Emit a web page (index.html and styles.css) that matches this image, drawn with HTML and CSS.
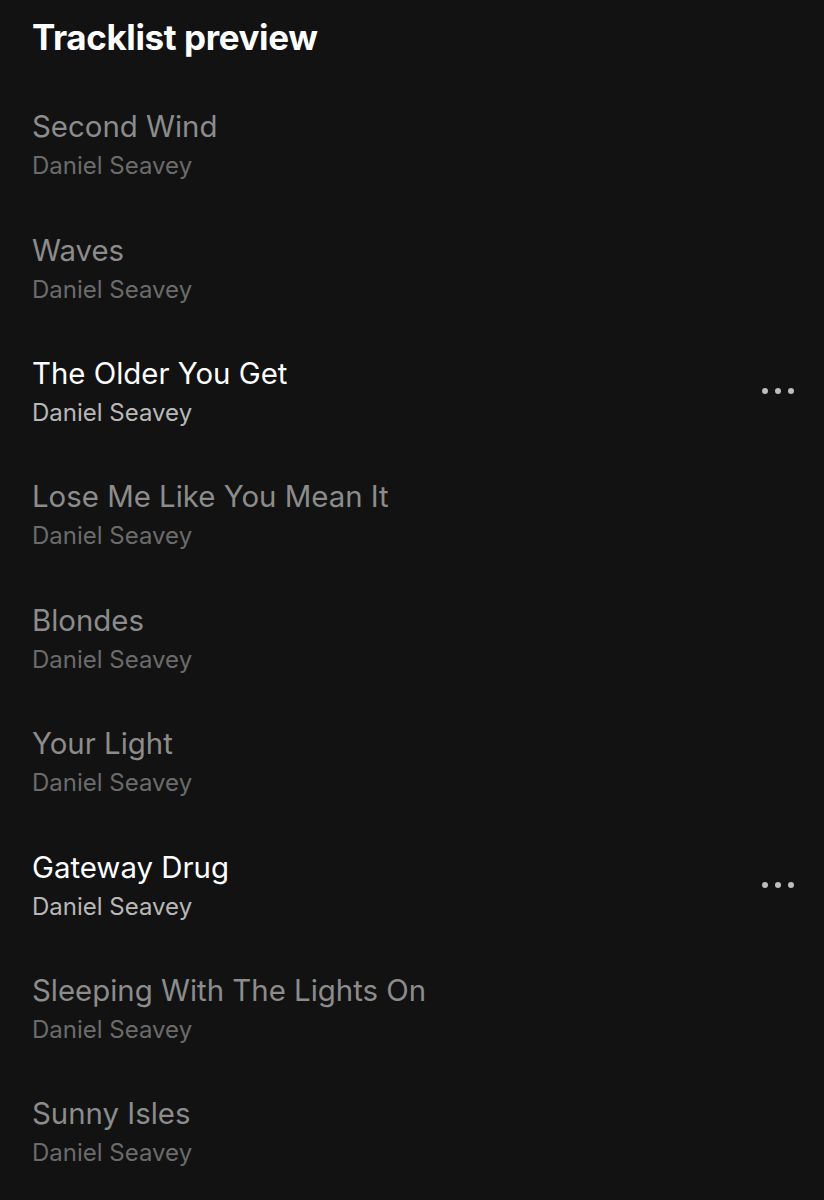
FILE: index.html
```html
<!DOCTYPE html>
<html lang="en">
<head>
    <meta charset="UTF-8">
    <meta name="viewport" content="width=device-width, initial-scale=1.0">
    <title>Tracklist preview</title>
    <link rel="stylesheet" href="styles.css">
</head>
<body>
    <h1 class="heading">Tracklist preview</h1>
    <ul class="tracks">
        <li class="track">
            <div class="info"><div class="name">Second Wind</div><div class="artist">Daniel Seavey</div></div>
        </li>
        <li class="track">
            <div class="info"><div class="name">Waves</div><div class="artist">Daniel Seavey</div></div>
        </li>
        <li class="track active">
            <div class="info"><div class="name">The Older You Get</div><div class="artist">Daniel Seavey</div></div>
            <span class="more"><i></i><i></i><i></i></span>
        </li>
        <li class="track">
            <div class="info"><div class="name">Lose Me Like You Mean It</div><div class="artist">Daniel Seavey</div></div>
        </li>
        <li class="track">
            <div class="info"><div class="name">Blondes</div><div class="artist">Daniel Seavey</div></div>
        </li>
        <li class="track">
            <div class="info"><div class="name">Your Light</div><div class="artist">Daniel Seavey</div></div>
        </li>
        <li class="track active">
            <div class="info"><div class="name">Gateway Drug</div><div class="artist">Daniel Seavey</div></div>
            <span class="more"><i></i><i></i><i></i></span>
        </li>
        <li class="track">
            <div class="info"><div class="name">Sleeping With The Lights On</div><div class="artist">Daniel Seavey</div></div>
        </li>
        <li class="track">
            <div class="info"><div class="name">Sunny Isles</div><div class="artist">Daniel Seavey</div></div>
        </li>
    </ul>
</body>
</html>
```

FILE: styles.css
```css
body {
    margin: 0;
    padding: 0 30px 0 32px;
    background: #121212;
    font-family: Inter, "Noto Sans", sans-serif;
    color: #fff;
}
.heading {
    margin: 0;
    padding-top: 14px;
    font-size: 35px;
    line-height: 46px;
    font-weight: 700;
    letter-spacing: -0.4px;
}
.tracks {
    list-style: none;
    margin: 0;
    padding: 23px 0 0;
}
.track {
    display: flex;
    align-items: center;
    justify-content: space-between;
    height: 123.4px;
}
.name {
    font-size: 29.4px;
    line-height: 42px;
    color: #8c8c8c;
}
.artist {
    font-size: 24px;
    line-height: 35px;
    color: #6b6b6b;
}
.active .name { color: #fff; }
.active .artist { color: #b8b8b8; }
.more {
    display: flex;
    gap: 7px;
}
.more i {
    width: 6px;
    height: 6px;
    border-radius: 50%;
    background: #bdbdbd;
}
```
